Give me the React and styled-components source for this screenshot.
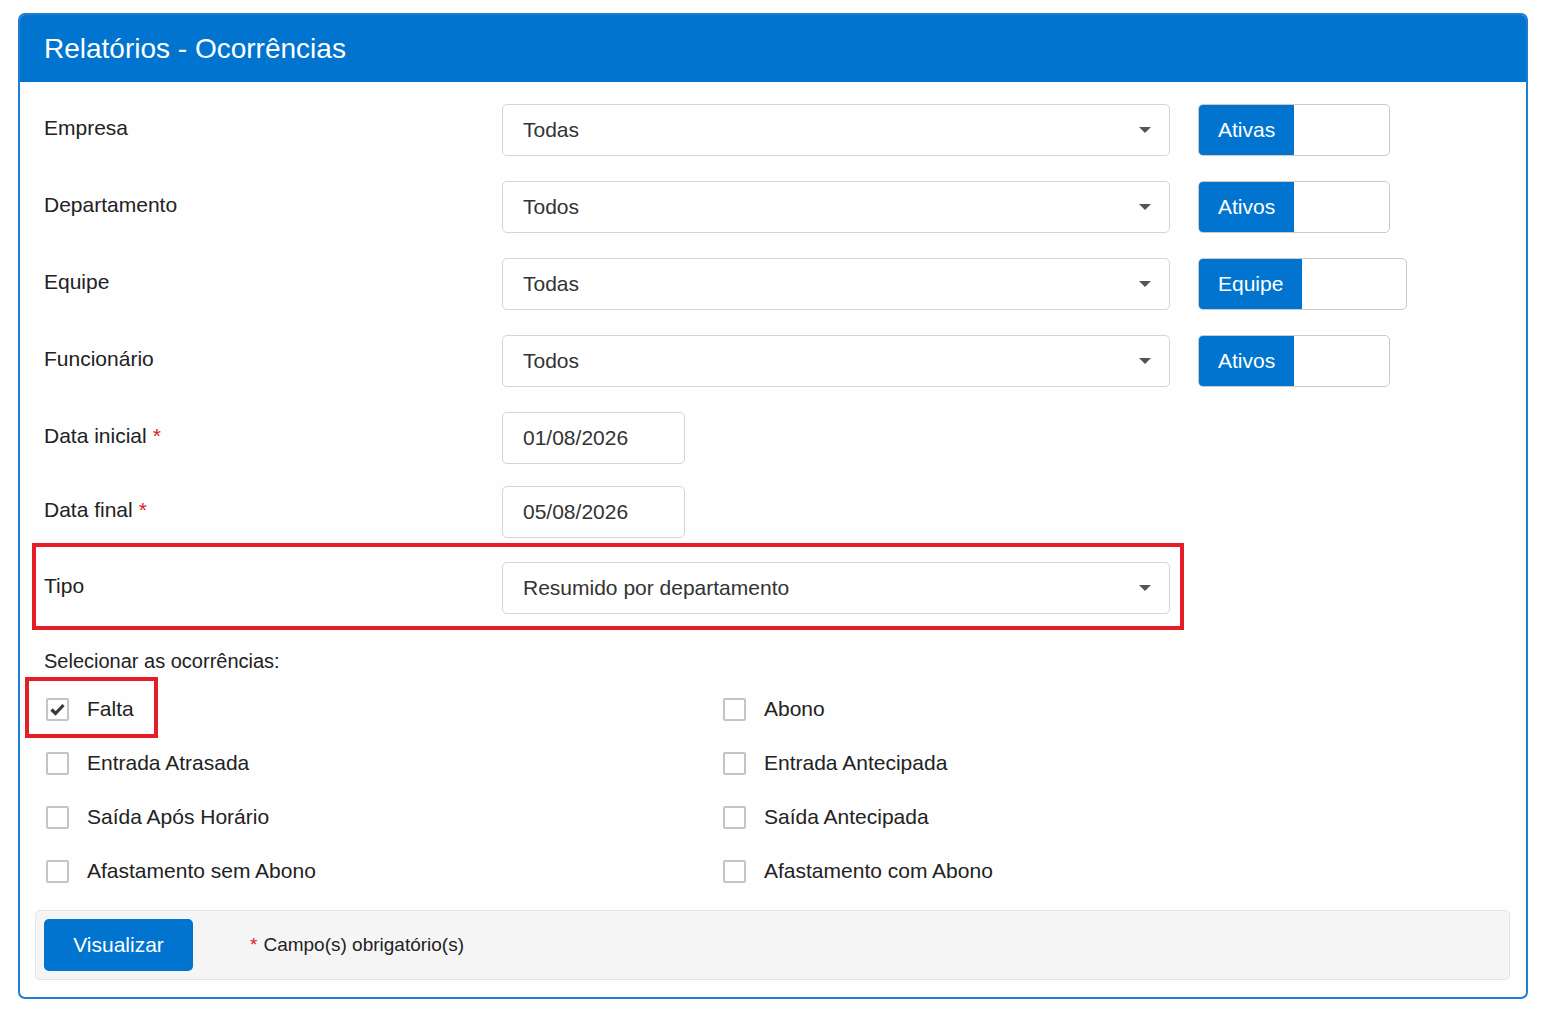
import React from "react";
import styled, { createGlobalStyle } from "styled-components";

const GlobalStyle = createGlobalStyle`
  body {
    margin: 0;
    background: #ffffff;
    font-family: "Liberation Sans", Arial, sans-serif;
    color: #222;
  }
`

const Page = styled.div`
  padding: 13px 0 19px 18px;
`
const Panel = styled.div`
  width: 1510px;
  box-sizing: border-box;
  border: 2px solid #1f7dd2;
  border-radius: 7px;
  overflow: hidden;
  background: #fefefe;
`
const Header = styled.div`
  height: 67px;
  background: #0074cf;
  display: flex;
  align-items: center;
  padding-left: 24px;
`
const Title = styled.h1`
  margin: 0;
  color: #fff;
  font-size: 28px;
  font-weight: normal;
`
const Body = styled.div`
  padding: 22px 16px 17px 15px;
`
const Form = styled.div`
  padding-left: 9px;
`
const FieldRow = styled.div`
  display: grid;
  grid-template-columns: ${p => (p.$noToggle ? "430px 668px" : "430px 668px auto")};
  column-gap: 28px;
  align-items: center;
  margin-bottom: ${p => p.$gap ?? 22}px;
`
const Label = styled.div`
  font-size: 21px;
  color: #222;
  margin-top: -4px;
`
const Required = styled.span`
  color: #e02020;
  margin-left: 6px;
`
const SelectBox = styled.div`
  height: 52px;
  box-sizing: border-box;
  border: 1px solid #d5d5d5;
  border-radius: 5px;
  background: #fff;
  display: flex;
  align-items: center;
  justify-content: space-between;
  padding: 0 18px 0 20px;
  font-size: 21px;
  color: #333;
`
const Caret = styled.span`
  width: 0;
  height: 0;
  border-left: 6px solid transparent;
  border-right: 6px solid transparent;
  border-top: 6px solid #555;
`
const DateInput = styled(SelectBox)`
  width: 183px;
`
const Toggle = styled.div`
  display: inline-grid;
  grid-template-columns: 1fr 1fr;
  justify-self: start;
  height: 52px;
  box-sizing: border-box;
  border: 1px solid #cacaca;
  border-radius: 5px;
  overflow: hidden;
  background: #fff;
`
const ToggleOn = styled.div`
  background: #0074cf;
  color: #fff;
  font-size: 21px;
  display: flex;
  align-items: center;
  padding: 0 19px;
`
const Highlight = styled.div`
  border: 4px solid #e31e26;
  width: max-content;
  justify-self: start;
`
const TipoBox = styled(Highlight)`
  margin: -17px 0 0 -12px;
  padding: 15px 10px 12px 8px;
`
const FaltaBox = styled(Highlight)`
  margin: -17px -24px -14px -19px;
  padding: 13px 20px 10px 15px;
`
const SectionTitle = styled.div`
  font-size: 20px;
  line-height: 24px;
  margin-top: 19px;
  color: #222;
`
const CheckGrid = styled.div`
  display: grid;
  grid-template-columns: 677px 1fr;
  row-gap: 24px;
  margin-top: 21px;
`
const CheckItem = styled.label`
  display: flex;
  align-items: center;
  height: 30px;
  padding-left: 2px;
  font-size: 21px;
  color: #222;
`
const Box = styled.span`
  width: 23px;
  height: 23px;
  box-sizing: border-box;
  border: 2px solid #c4c4c4;
  border-radius: 2px;
  background: #fff;
  margin-right: 18px;
  display: flex;
  align-items: center;
  justify-content: center;
  flex-shrink: 0;
`
const Well = styled.div`
  margin-top: 24px;
  background: #f5f5f5;
  border: 1px solid #e3e3e3;
  border-radius: 5px;
  padding: 8px;
  display: flex;
  align-items: center;
`
const Button = styled.button`
  width: 149px;
  height: 52px;
  border: none;
  border-radius: 5px;
  background: #0074cf;
  color: #fff;
  font-family: inherit;
  font-size: 21px;
`
const Note = styled.div`
  margin-left: 57px;
  font-size: 19px;
  color: #222;
`
const Star = styled.span`
  color: #e02020;
  margin-right: 6px;
`

const Check = ({ checked, children }) => (
  <CheckItem>
    <Box>
      {checked && (
        <svg width="15" height="13" viewBox="0 0 15 13">
          <path d="M1.5 6.5 L5.5 10.5 L13.5 2" fill="none" stroke="#3a3a3a" strokeWidth="3.2" />
        </svg>
      )}
    </Box>
    {children}
  </CheckItem>
)

const selects = [
  { label: "Empresa", value: "Todas", toggle: "Ativas" },
  { label: "Departamento", value: "Todos", toggle: "Ativos" },
  { label: "Equipe", value: "Todas", toggle: "Equipe" },
  { label: "Funcionário", value: "Todos", toggle: "Ativos" },
]

const App = () => {
  return (
    <Page>
      <GlobalStyle />
      <Panel>
        <Header>
          <Title>Relatórios - Ocorrências</Title>
        </Header>
        <Body>
          <Form>
            {selects.map(s => (
              <FieldRow key={s.label} $gap={25}>
                <Label>{s.label}</Label>
                <SelectBox>
                  {s.value}
                  <Caret />
                </SelectBox>
                <Toggle>
                  <ToggleOn>{s.toggle}</ToggleOn>
                  <div />
                </Toggle>
              </FieldRow>
            ))}
            <FieldRow>
              <Label>Data inicial<Required>*</Required></Label>
              <DateInput>01/08/2026</DateInput>
            </FieldRow>
            <FieldRow>
              <Label>Data final<Required>*</Required></Label>
              <DateInput>05/08/2026</DateInput>
            </FieldRow>
            <TipoBox>
              <FieldRow $gap={0} $noToggle>
                <Label>Tipo</Label>
                <SelectBox>
                  Resumido por departamento
                  <Caret />
                </SelectBox>
              </FieldRow>
            </TipoBox>
            <SectionTitle>Selecionar as ocorrências:</SectionTitle>
            <CheckGrid>
              <FaltaBox>
                <Check checked>Falta</Check>
              </FaltaBox>
              <Check>Abono</Check>
              <Check>Entrada Atrasada</Check>
              <Check>Entrada Antecipada</Check>
              <Check>Saída Após Horário</Check>
              <Check>Saída Antecipada</Check>
              <Check>Afastamento sem Abono</Check>
              <Check>Afastamento com Abono</Check>
            </CheckGrid>
          </Form>
          <Well>
            <Button>Visualizar</Button>
            <Note><Star>*</Star>Campo(s) obrigatório(s)</Note>
          </Well>
        </Body>
      </Panel>
    </Page>
  );
};

export default App;
